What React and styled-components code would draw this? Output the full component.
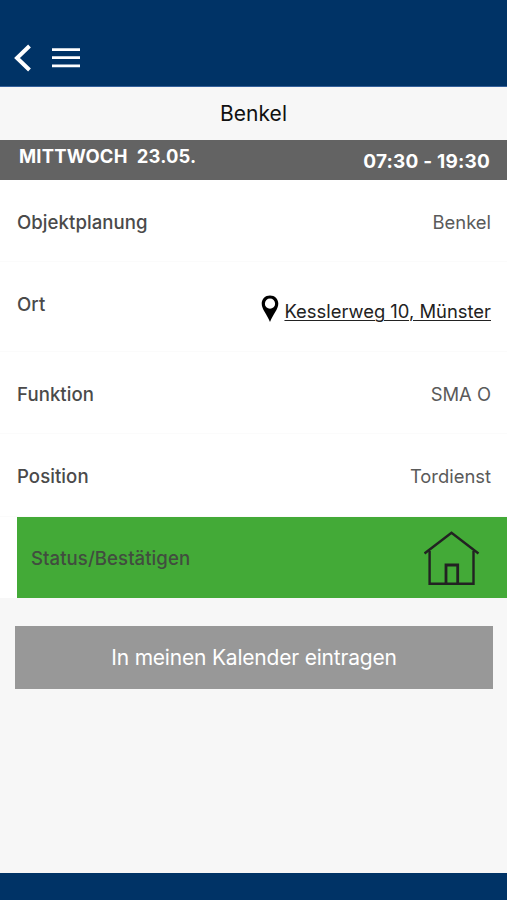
import React from "react";
import styled, { createGlobalStyle } from "styled-components";

const rows = [
  { label: "Objektplanung", value: "Benkel", height: 82 },
  { label: "Ort", value: "Kesslerweg 10, Münster", height: 90, address: true },
  { label: "Funktion", value: "SMA O", height: 82 },
  { label: "Position", value: "Tordienst", height: 83 },
];

function App() {
  return (
    <Screen>
      <GlobalStyle />
      <Header>
        <IconButton title="Zurück" $width={20}>
          <svg width="18" height="28" viewBox="0 0 18 28">
            <path d="M15.5 2 L3 14 L15.5 26" fill="none" stroke="#fff" strokeWidth="4" />
          </svg>
        </IconButton>
        <IconButton title="Menü" $width={28}>
          <svg width="28" height="28" viewBox="0 0 28 28">
            <path d="M0 5.6H28M0 13.7H28M0 21.8H28" stroke="#fff" strokeWidth="2.8" />
          </svg>
        </IconButton>
      </Header>
      <Title>Benkel</Title>
      <DateBar>
        <Day>MITTWOCH&nbsp; 23.05.</Day>
        <Time>07:30 - 19:30</Time>
      </DateBar>
      <List>
        {rows.map((row) => (
          <Row key={row.label} $height={row.height}>
            <Label>{row.label}</Label>
            {row.address ? (
              <Address>
                <svg width="18" height="28" viewBox="0 0 18 28">
                  <path
                    d="M9 0.5C4.2 0.5 0.7 4 0.7 8.6C0.7 14.5 6 19.5 9 27C12 19.5 17.3 14.5 17.3 8.6C17.3 4 13.8 0.5 9 0.5ZM9 3.6A5.1 5.1 0 1 1 9 13.8A5.1 5.1 0 1 1 9 3.6Z"
                    fill="#000"
                    fillRule="evenodd"
                  />
                </svg>
                <AddressLink>{row.value}</AddressLink>
              </Address>
            ) : (
              <Value>{row.value}</Value>
            )}
          </Row>
        ))}
        <Status>
          <StatusLabel>Status/Bestätigen</StatusLabel>
          <HouseIcon width="56" height="56" viewBox="0 0 56 56">
            <g fill="none" stroke="#222" strokeWidth="2.4">
              <path d="M0.5 22.5 L27.5 1.7 L54.5 22.5" />
              <path d="M5.6 20V52.8H49.5V20" />
              <path d="M22 53V34H33.7V53" strokeWidth="2.8" />
            </g>
          </HouseIcon>
        </Status>
      </List>
      <CalendarButton>In meinen Kalender eintragen</CalendarButton>
      <Footer />
    </Screen>
  );
}

export default App;

const GlobalStyle = createGlobalStyle`
  body {
    margin: 0;
  }
  * {
    box-sizing: border-box;
  }
`;

const Screen = styled.div`
  display: flex;
  flex-direction: column;
  height: 900px;
  background-color: #f7f7f7;
  font-family: Inter, "Liberation Sans", sans-serif;
  font-size: 18.4px;
  line-height: 24px;
  white-space: nowrap;
`;

const Header = styled.header`
  display: flex;
  align-items: flex-end;
  gap: 18px;
  height: 87px;
  padding: 0 0 14px 14px;
  background-color: #003366;
  border-bottom: 1px solid #35619b;
`;

const IconButton = styled.button`
  display: flex;
  padding: 0;
  border: none;
  background: none;
  cursor: pointer;
  width: ${(props) => props.$width}px;
`;

const Title = styled.h1`
  margin: 0;
  height: 53px;
  font-size: 21px;
  font-weight: 400;
  line-height: 54px;
  letter-spacing: 0.05px;
  text-align: center;
  color: #111;
`;

const DateBar = styled.div`
  display: flex;
  justify-content: space-between;
  height: 40px;
  padding: 4px 17px 0 19px;
  background-color: #636363;
  color: #fff;
  font-weight: 700;
`;

const Day = styled.span`
  letter-spacing: 0.2px;
`;

const Time = styled.span`
  padding-top: 6px;
  font-size: 19px;
  letter-spacing: 0.2px;
`;

const List = styled.div`
  background-color: #fff;
`;

const Row = styled.div`
  display: flex;
  justify-content: space-between;
  height: ${(props) => props.$height}px;
  padding: 30px 16px 0 17px;
  border-bottom: 1px solid #fbfbfb;
`;

const Label = styled.span`
  color: #4a4a4a;
  font-size: 18.6px;
  font-weight: 500;
  letter-spacing: 0.06px;
`;

const Value = styled.span`
  color: #5a5a5a;
`;

const Address = styled.div`
  display: flex;
  align-items: flex-start;
  gap: 5px;
  padding-top: 3px;
`;

const AddressLink = styled.a`
  padding-top: 4px;
  color: #222;
  text-decoration: underline;
  text-decoration-thickness: 1px;
  text-underline-offset: 2px;
  cursor: pointer;
`;

const Status = styled.div`
  display: flex;
  align-items: center;
  justify-content: space-between;
  height: 81px;
  margin-left: 17px;
  padding: 0 27px 0 14px;
  background-color: #43aa37;
`;

const StatusLabel = styled(Label)`
  color: #414d3f;
`;

const HouseIcon = styled.svg`
  margin-top: 2px;
`;

const CalendarButton = styled.button`
  height: 63px;
  margin: 28px 14px 0 15px;
  padding: 0;
  border: none;
  background-color: #989898;
  color: #fff;
  font-family: inherit;
  font-size: 21px;
  letter-spacing: -0.2px;
  cursor: pointer;
`;

const Footer = styled.footer`
  height: 27px;
  margin-top: auto;
  background-color: #003366;
`;
